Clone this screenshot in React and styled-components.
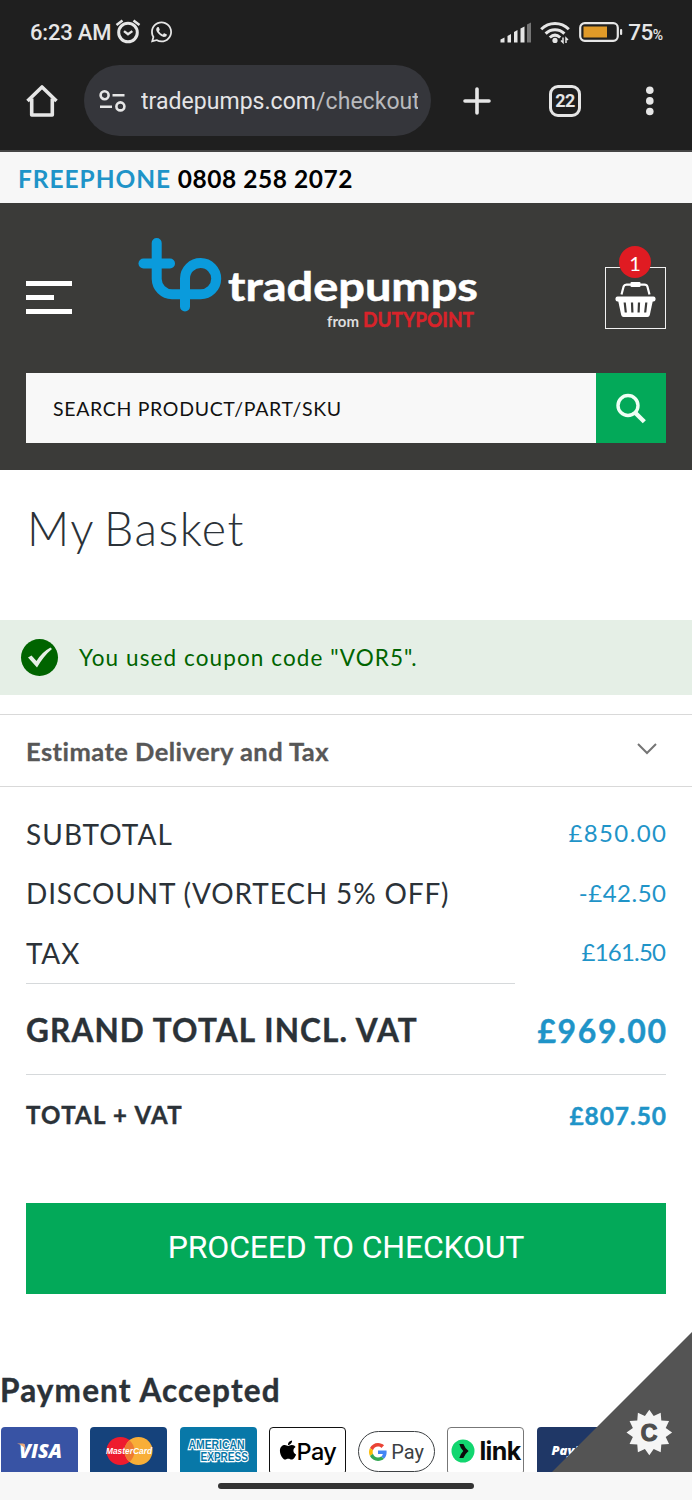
import React from "react";
import styled, { createGlobalStyle } from "styled-components";
import { FaApple, FaWhatsapp } from "react-icons/fa";

const GlobalStyle = createGlobalStyle`
  * {
    box-sizing: border-box;
  }
  body {
    margin: 0;
    background: #fff;
    font-family: Lato, "Open Sans", sans-serif;
    color: #2b3238;
  }
  svg {
    display: block;
    flex-shrink: 0;
    overflow: visible;
  }
`;

const Screen = styled.div`
  width: 692px;
  height: 1500px;
  display: flex;
  flex-direction: column;
  overflow: hidden;
  position: relative;
`;

/* phone + browser chrome */
const Chrome = styled.div`
  height: 152px;
  flex-shrink: 0;
  background: #1f1f1f;
  border-bottom: 2px solid #454545;
  color: #e6e6e6;
  font-family: Roboto, sans-serif;
`;
const StatusBar = styled.div`
  height: 65px;
  padding: 0 30px;
  display: flex;
  justify-content: space-between;
`;
const StatusGroup = styled.div`
  display: flex;
  align-items: center;
  height: 64px;
`;
const Clock = styled.span`
  width: 85px;
  font-size: 22px;
  font-weight: 500;
  letter-spacing: -0.2px;
  white-space: nowrap;
`;
const WhatsApp = styled(FaWhatsapp)`
  width: 23px;
  height: 24px;
  margin-left: 9px;
`;
const Signal = styled.svg`
  margin-right: 9px;
`;
const Wifi = styled.svg`
  margin-right: 9px;
`;
const BatteryText = styled.span`
  margin-left: 5px;
  font-size: 22.5px;
  font-weight: 500;
  letter-spacing: -0.6px;
  small {
    font-size: 14px;
    letter-spacing: -1px;
  }
`;
const Toolbar = styled.div`
  height: 71px;
  padding: 0 36px 0 26px;
  display: flex;
  align-items: center;
`;
const AddressBar = styled.div`
  width: 347px;
  height: 71px;
  margin: 0 32px 0 26px;
  padding: 0 13px 0 15px;
  border-radius: 36px;
  background: #35363b;
  display: flex;
  align-items: center;
`;
const Url = styled.div`
  flex: 1;
  margin: 1px 0 0 15px;
  overflow: hidden;
  white-space: nowrap;
  font-size: 23px;
  letter-spacing: 0.04px;
  color: #e4e4e6;
  span {
    color: #b9babd;
  }
`;
const TabCount = styled.div`
  width: 32px;
  height: 32px;
  margin: 0 64px 0 58px;
  border: 3px solid #e6e6e6;
  border-radius: 9px;
  display: flex;
  align-items: center;
  justify-content: center;
  font-size: 18px;
  font-weight: 700;
  letter-spacing: -0.5px;
`;

/* shop header */
const PhoneBar = styled.div`
  height: 51px;
  flex-shrink: 0;
  padding-left: 18px;
  background: #f7f7f7;
  line-height: 53px;
  font-size: 24.5px;
  font-weight: 700;
  color: #000;
  letter-spacing: 0.55px;
  white-space: nowrap;
  span {
    color: #1f94c8;
    letter-spacing: 0.95px;
  }
`;
const Header = styled.header`
  height: 267px;
  flex-shrink: 0;
  padding: 0 26px;
  background: #3b3b39;
`;
const HeaderTop = styled.div`
  height: 170px;
  display: flex;
  align-items: flex-start;
`;
const Burger = styled.div`
  width: 46px;
  margin-top: 78px;
  display: flex;
  flex-direction: column;
  gap: 9.5px;
`;
const BurgerLine = styled.i`
  width: ${(props) => props.$width}px;
  height: 4.5px;
  background: #fff;
`;
const Logo = styled.svg`
  margin: 27px 0 0 65px;
`;
const CartBox = styled.div`
  position: relative;
  width: 61px;
  height: 62px;
  margin: 64px 0 0 auto;
  border: 1.5px solid #f1f1f1;
  display: flex;
  justify-content: center;
  padding-top: 13px;
`;
const CartBadge = styled.span`
  position: absolute;
  top: -22px;
  left: 13px;
  width: 32px;
  height: 32px;
  border-radius: 50%;
  background: #e01b22;
  color: #fff;
  font-size: 20px;
  line-height: 34px;
  text-align: center;
`;
const SearchForm = styled.div`
  height: 70px;
  display: flex;
`;
const SearchField = styled.div`
  flex: 1;
  padding-left: 27px;
  background: #f8f8f8;
  color: #111;
  font-size: 19.5px;
  line-height: 71px;
  letter-spacing: 0.67px;
`;
const SearchButton = styled.div`
  width: 70px;
  background: #03a959;
  display: flex;
  align-items: center;
  justify-content: center;
`;

/* basket */
const PageTitle = styled.h1`
  margin: 0;
  height: 150px;
  padding: 28px 0 0 27px;
  font-size: 46.5px;
  line-height: 60px;
  font-weight: 300;
  letter-spacing: 1.5px;
  word-spacing: -4px;
`;
const Message = styled.div`
  height: 75px;
  padding-left: 21px;
  background: #e5efe6;
  color: #006400;
  display: flex;
  align-items: center;
  gap: 21px;
  font-size: 22.5px;
  letter-spacing: 1.1px;
  line-height: 76px;
`;
const Estimate = styled.div`
  height: 73px;
  margin-top: 19px;
  padding: 0 35px 0 26px;
  border-top: 1px solid #d9d9d9;
  border-bottom: 1px solid #d9d9d9;
  display: flex;
  align-items: center;
  justify-content: space-between;
  color: #575757;
  font-size: 25.5px;
  font-weight: 700;
  letter-spacing: 0.45px;
  line-height: 72px;
  -webkit-text-stroke: 0.3px;
  svg {
    margin-top: -4px;
  }
`;
const Totals = styled.div`
  height: 416px;
  padding: 17px 26px 0;
`;
const TotalRow = styled.div`
  height: ${(props) => props.$height || 59.5}px;
  padding-top: ${(props) => props.$drop || 0}px;
  display: flex;
  align-items: center;
  justify-content: space-between;
`;
const Label = styled.span`
  font-size: ${(props) => props.$size || 28}px;
  font-weight: ${(props) => (props.$bold ? 700 : 400)};
  letter-spacing: ${(props) => props.$spacing}px;
  -webkit-text-stroke: ${(props) => (props.$bold ? 0.4 : 0)}px;
  white-space: nowrap;
`;
const Price = styled.span`
  color: #1f94c8;
  font-size: ${(props) => props.$size || 24}px;
  font-weight: ${(props) => (props.$bold ? 700 : 400)};
  letter-spacing: ${(props) => props.$spacing}px;
  -webkit-text-stroke: ${(props) => (props.$bold ? 0.4 : 0)}px;
  margin-right: ${(props) => -props.$spacing}px;
  margin-top: ${(props) => (props.$bold ? 1 : -2)}px;
`;
const Divider = styled.div`
  width: ${(props) => props.$width}px;
  height: 1px;
  background: #d6d9db;
`;
const Checkout = styled.div`
  height: 91px;
  margin: 0 26px;
  background: #03a959;
  color: #fff;
  font-family: Roboto, sans-serif;
  font-size: 32px;
  letter-spacing: -0.2px;
  line-height: 88px;
  text-align: center;
`;
const PaymentTitle = styled.h2`
  margin: 75px 0 0;
  height: 58px;
  font-size: 31.5px;
  line-height: 43px;
  font-weight: 700;
  letter-spacing: 1.15px;
  -webkit-text-stroke: 0.4px;
`;
const Cards = styled.div`
  height: 45px;
  padding-left: 1px;
  display: flex;
  gap: 12.3px;
  overflow: hidden;
`;
const Card = styled.div`
  width: 77px;
  height: 48px;
  flex-shrink: 0;
  border-radius: 4px;
  background: ${(props) => props.$bg || "#fff"};
  border: ${(props) => props.$border || "none"};
  display: flex;
  align-items: center;
  justify-content: center;
`;
const GPayPill = styled(Card)`
  height: 41px;
  margin-top: 4px;
  border-radius: 21px;
  gap: 4px;
  color: #3c4043;
  font: 400 20px Roboto, sans-serif;
`;
const ApplePay = styled(Card)`
  font: 500 23.5px Inter, sans-serif;
  color: #000;
  letter-spacing: -0.6px;
  svg {
    width: 18px;
    height: 22px;
    margin-bottom: 3px;
  }
`;
const LinkCard = styled(Card)`
  gap: 4px;
  color: #0b0b0b;
  font: 700 25px Inter, sans-serif;
  letter-spacing: -0.6px;
`;
const Consent = styled.svg`
  position: absolute;
  right: 0;
  bottom: 28px;
`;
const NavBar = styled.div`
  height: 28px;
  flex-shrink: 0;
  background: #f7f7f7;
  display: flex;
  justify-content: center;
  padding-top: 11px;
`;
const NavHandle = styled.div`
  width: 256px;
  height: 6px;
  border-radius: 3px;
  background: #333;
`;

const AlarmIcon = () => (
  <svg width="26" height="26" viewBox="0 0 26 26" fill="none" stroke="#e6e6e6" strokeWidth="3">
    <circle cx="13" cy="13.5" r="9.3" />
    <path d="M1.5 6 L7.5 1.5 M24.5 6 L18.5 1.5" strokeWidth="2.6" />
    <path d="M9 12.1 L13 15.3 L17.3 12.1" strokeWidth="2.4" />
  </svg>
);

const SignalIcon = () => (
  <Signal width="31" height="22" viewBox="0 0 31 22" fill="#e6e6e6">
    <path d="M0.5 18.5 L4.5 16.5 V21.5 H0.5 Z" />
    <path d="M7.5 15 L11 13 V21.5 H7.5 Z" />
    <path d="M14 11 L17.5 9 V21.5 H14 Z" />
    <path d="M20.5 7.5 L24.5 5.5 V21.5 H20.5 Z" />
    <path d="M27 3.5 L31 1.5 V21.5 H27 Z" fill="#757575" />
  </Signal>
);

const WifiIcon = () => (
  <Wifi width="30" height="23" viewBox="0 0 30 23" fill="none" stroke="#e6e6e6" strokeWidth="3">
    <path d="M1.2 8.3 C9 0.6 21 0.6 28.8 8.3" />
    <path d="M5.6 12.6 C11 7.4 19 7.4 24.4 12.6" />
    <path d="M9.8 16.5 C13 13.6 17 13.6 20.2 16.5" />
    <circle cx="15" cy="19.4" r="2.6" fill="#e6e6e6" stroke="none" />
    <path d="M23 16.5 V21.5 L21 19.5 M26 22 V17 L28 19" strokeWidth="1.5" />
  </Wifi>
);

const BatteryIcon = () => (
  <svg width="44" height="20" viewBox="0 0 44 20">
    <rect x="1.2" y="1.2" width="37.6" height="17.6" rx="4.5" fill="none" stroke="#e6e6e6" strokeWidth="2.2" />
    <rect x="4.5" y="4.5" width="23.5" height="11" fill="#e09a28" />
    <rect x="41" y="7" width="2.2" height="6" rx="1" fill="#e6e6e6" />
  </svg>
);

const HomeIcon = () => (
  <svg width="32" height="34" viewBox="0 0 32 34" fill="none" stroke="#e6e6e6" strokeWidth="3.6" strokeLinejoin="round">
    <path d="M5.7 14.5 V31 H26.3 V14.5" />
    <path d="M1.5 17 L16 3 L30.5 17" />
  </svg>
);

const TuneIcon = () => (
  <svg width="27" height="24" viewBox="0 0 27 24" fill="none" stroke="#e6e6e6" strokeWidth="2.6">
    <circle cx="5.6" cy="6.2" r="4" />
    <path d="M13.5 6.2 H25.5 M1 17.8 H13" />
    <circle cx="21.4" cy="17.4" r="4" />
  </svg>
);

const TradePumpsLogo = () => (
  <Logo width="342" height="104" viewBox="137 230 342 104">
    <g fill="none" stroke="#0a9bdc" strokeWidth="10" strokeLinecap="round">
      <path d="M156.7 243 V279 A15.5 15.5 0 0 0 172 294.2 H200.5 A15.6 15.6 0 1 0 185 278.5 V306.5" />
      <path d="M143.5 263.5 H170" />
    </g>
    <text x="228" y="301" fontFamily="Lato" fontSize="40" fontWeight="700" fill="#fff" stroke="#fff" strokeWidth="0.5" textLength="250" lengthAdjust="spacingAndGlyphs">
      tradepumps
    </text>
    <text x="327" y="327" fontFamily="Lato" fontSize="15" fontWeight="700" fill="#ddd" textLength="32">
      from
    </text>
    <text x="363" y="327" fontFamily="Lato" fontSize="20" fontWeight="700" fill="#d8232a" stroke="#d8232a" strokeWidth="0.5" textLength="111" lengthAdjust="spacingAndGlyphs">
      DUTYPOINT
    </text>
  </Logo>
);

const BasketIcon = () => (
  <svg width="41" height="37" viewBox="0 0 41 37">
    <path d="M6.5 13.5 L8.6 5.5 Q9.3 3.6 11.5 3.6 H29.5 Q31.8 3.6 32.4 5.5 L34.5 13.5" fill="none" stroke="#fff" strokeWidth="2.2" />
    <rect x="15.5" y="1" width="10" height="5" rx="1" fill="#fff" />
    <rect x="0.5" y="15.5" width="40" height="5" rx="2" fill="#fff" />
    <path d="M3 19 H38 L34.8 34 Q34.3 36 32.5 36 H8.5 Q6.7 36 6.2 34 Z" fill="#fff" />
    <path d="M9.7 21.5 L10.8 31.5 M17 21.5 L17.4 31.5 M24 21.5 L23.6 31.5 M31.3 21.5 L30.2 31.5" stroke="#3b3b39" strokeWidth="2.2" />
  </svg>
);

const SearchIcon = () => (
  <svg width="32" height="32" viewBox="0 0 32 32" fill="none" stroke="#effff5" strokeWidth="3.4">
    <circle cx="13" cy="13.5" r="10" />
    <path d="M20 20.5 L29.3 29.8" strokeWidth="4.4" />
  </svg>
);

const CheckIcon = () => (
  <svg width="37" height="37" viewBox="0 0 37 37">
    <circle cx="18.5" cy="18.5" r="18.5" fill="#006400" />
    <path d="M7 18.5 L10.5 16.5 L15.5 22 Q21 13 29.5 8.5 L31 10 Q23 16.5 16 28.5 Z" fill="#e5efe6" />
  </svg>
);

const VisaMark = () => (
  <svg width="46" height="18" viewBox="0 0 46 18">
    <text x="2" y="16" fontFamily="Open Sans" fontStyle="italic" fontWeight="800" fontSize="20" fill="#fff" textLength="43" lengthAdjust="spacingAndGlyphs">
      VISA
    </text>
    <path d="M0 1.6 H6 Q7.6 1.8 8 3.5 L9 8 Q6 3.5 0 1.6 Z" fill="#e8a978" />
  </svg>
);

const MasterCardMark = () => (
  <svg width="48" height="30" viewBox="0 0 48 30">
    <circle cx="15.5" cy="15" r="14" fill="#ee1b2e" />
    <circle cx="33.5" cy="15" r="14" fill="#f8ae38" />
    <path d="M24.5 4.3 A14 14 0 0 1 24.5 25.7 A14 14 0 0 1 24.5 4.3 Z" fill="#ee7a32" />
    <text x="1" y="18.2" fontFamily="Liberation Sans" fontStyle="italic" fontWeight="700" fontSize="9" fill="#fff" textLength="46" lengthAdjust="spacingAndGlyphs">
      MasterCard
    </text>
  </svg>
);

const AmexMark = () => (
  <svg width="62" height="26" viewBox="0 0 62 26" fontFamily="Liberation Sans" fontWeight="700" fontSize="12" fill="#0878a8" stroke="#fff" strokeWidth="2.4" paintOrder="stroke">
    <text x="1.5" y="11" textLength="56" lengthAdjust="spacingAndGlyphs">
      AMERICAN
    </text>
    <text x="13.5" y="23" textLength="47.5" lengthAdjust="spacingAndGlyphs">
      EXPRESS
    </text>
  </svg>
);

const GoogleG = () => (
  <svg width="18" height="18" viewBox="0 0 48 48">
    <path fill="#EA4335" d="M24 9.5c3.54 0 6.71 1.22 9.21 3.6l6.85-6.85C35.9 2.38 30.47 0 24 0 14.62 0 6.51 5.38 2.56 13.22l7.98 6.19C12.43 13.72 17.74 9.5 24 9.5z" />
    <path fill="#4285F4" d="M46.98 24.55c0-1.57-.15-3.09-.38-4.55H24v9.02h12.94c-.58 2.96-2.26 5.48-4.78 7.18l7.73 6c4.51-4.18 7.09-10.36 7.09-17.65z" />
    <path fill="#FBBC05" d="M10.53 28.59c-.48-1.45-.76-2.99-.76-4.59s.27-3.14.76-4.59l-7.98-6.19C.92 16.46 0 20.12 0 24c0 3.88.92 7.54 2.56 10.78l7.97-6.19z" />
    <path fill="#34A853" d="M24 48c6.48 0 11.93-2.13 15.89-5.81l-7.73-6c-2.15 1.45-4.92 2.3-8.16 2.3-6.26 0-11.57-4.22-13.47-9.91l-7.98 6.19C6.51 42.62 14.62 48 24 48z" />
  </svg>
);

const LinkIcon = () => (
  <svg width="24" height="24" viewBox="0 0 24 24">
    <circle cx="12" cy="12" r="11.5" fill="#12d66f" />
    <path d="M8.3 5 H12.4 Q13.8 9 17.6 12 Q13.8 15 12.4 19 H8.3 Q9.3 15 12.3 12 Q9.3 9 8.3 5 Z" fill="#0b0b0b" />
  </svg>
);

const PayPalMark = () => (
  <svg width="48" height="20" viewBox="0 0 48 20">
    <text x="0.5" y="14" fontFamily="Open Sans" fontStyle="italic" fontWeight="800" fontSize="13" fill="#fff">
      PayPal
    </text>
  </svg>
);

// alternating outer / inner radius around the centre of the seal
const sealPoints = Array.from({ length: 24 }, (_, i) => {
  const r = i % 2 ? 17 : 22.8;
  const a = (i * Math.PI) / 12;
  return `${97.3 + r * Math.cos(a)},${100.5 + r * Math.sin(a)}`;
}).join(" ");

const ConsentCorner = () => (
  <Consent width="140" height="140" viewBox="0 0 140 140">
    <path d="M140 0 V140 H0 Z" fill="#545454" />
    <polygon points={sealPoints} fill="#f5f5f5" />
    <text x="97" y="109" textAnchor="middle" fontFamily="Liberation Sans" fontWeight="700" fontSize="23" fill="#4d4d4d" stroke="#4d4d4d" strokeWidth="1.2">
      C
    </text>
  </Consent>
);

const rows = [
  { label: "SUBTOTAL", value: "£850.00", ls: 1.05, ps: 1.4 },
  { label: "DISCOUNT (VORTECH 5% OFF)", value: "-£42.50", ls: 0.85, ps: 0.5 },
  { label: "TAX", value: "£161.50", ls: 0.8, ps: -0.8 },
];

const App = () => (
  <>
    <GlobalStyle />
    <Screen>
      <Chrome>
        <StatusBar>
          <StatusGroup>
            <Clock>6:23 AM</Clock>
            <AlarmIcon />
            <WhatsApp />
          </StatusGroup>
          <StatusGroup>
            <SignalIcon />
            <WifiIcon />
            <BatteryIcon />
            <BatteryText>
              75<small>%</small>
            </BatteryText>
          </StatusGroup>
        </StatusBar>
        <Toolbar>
          <HomeIcon />
          <AddressBar>
            <TuneIcon />
            <Url>
              tradepumps.com<span>/checkout</span>
            </Url>
          </AddressBar>
          <svg width="28" height="28" viewBox="0 0 28 28" stroke="#e6e6e6" strokeWidth="3.6" strokeLinecap="round">
            <path d="M14 2 V26 M2 14 H26" />
          </svg>
          <TabCount>22</TabCount>
          <svg width="9" height="30" viewBox="0 0 9 30" fill="#e6e6e6">
            <circle cx="4.8" cy="4.3" r="3.8" />
            <circle cx="4.8" cy="14.9" r="3.8" />
            <circle cx="4.8" cy="25.5" r="3.8" />
          </svg>
        </Toolbar>
      </Chrome>

      <PhoneBar>
        <span>FREEPHONE</span> 0808 258 2072
      </PhoneBar>
      <Header>
        <HeaderTop>
          <Burger>
            <BurgerLine $width={46} />
            <BurgerLine $width={28} />
            <BurgerLine $width={46} />
          </Burger>
          <TradePumpsLogo />
          <CartBox>
            <BasketIcon />
            <CartBadge>1</CartBadge>
          </CartBox>
        </HeaderTop>
        <SearchForm>
          <SearchField>SEARCH PRODUCT/PART/SKU</SearchField>
          <SearchButton>
            <SearchIcon />
          </SearchButton>
        </SearchForm>
      </Header>

      <PageTitle>My Basket</PageTitle>
      <Message>
        <CheckIcon />
        <span>You used coupon code "VOR5".</span>
      </Message>
      <Estimate>
        <span>Estimate Delivery and Tax</span>
        <svg width="20" height="12" viewBox="0 0 20 12" fill="none" stroke="#757575" strokeWidth="2">
          <path d="M1 1 L10 10 L19 1" />
        </svg>
      </Estimate>

      <Totals>
        {rows.map((row) => (
          <TotalRow key={row.label}>
            <Label $spacing={row.ls}>{row.label}</Label>
            <Price $spacing={row.ps}>{row.value}</Price>
          </TotalRow>
        ))}
        <Divider $width={489} />
        <TotalRow $height={90} $drop={2}>
          <Label $bold $size={31.5} $spacing={1.15}>
            GRAND TOTAL INCL. VAT
          </Label>
          <Price $bold $size={32} $spacing={1.6}>
            £969.00
          </Price>
        </TotalRow>
        <Divider $width={640} />
        <TotalRow $height={80}>
          <Label $bold $size={24} $spacing={1.25}>
            TOTAL + VAT
          </Label>
          <Price $bold $size={24.5} $spacing={0.9}>
            £807.50
          </Price>
        </TotalRow>
      </Totals>
      <Checkout>PROCEED TO CHECKOUT</Checkout>

      <PaymentTitle>Payment Accepted</PaymentTitle>
      <Cards>
        <Card $bg="#3853a4">
          <VisaMark />
        </Card>
        <Card $bg="#15427b">
          <MasterCardMark />
        </Card>
        <Card $bg="#0878a8">
          <AmexMark />
        </Card>
        <ApplePay $border="1.5px solid #111">
          <FaApple />
          Pay
        </ApplePay>
        <GPayPill $border="1.5px solid #3c4043">
          <GoogleG />
          Pay
        </GPayPill>
        <LinkCard $border="1px solid #777">
          <LinkIcon />
          link
        </LinkCard>
        <Card $bg="#1f3766">
          <PayPalMark />
        </Card>
      </Cards>
      <NavBar>
        <NavHandle />
      </NavBar>
      <ConsentCorner />
    </Screen>
  </>
);

export default App;
